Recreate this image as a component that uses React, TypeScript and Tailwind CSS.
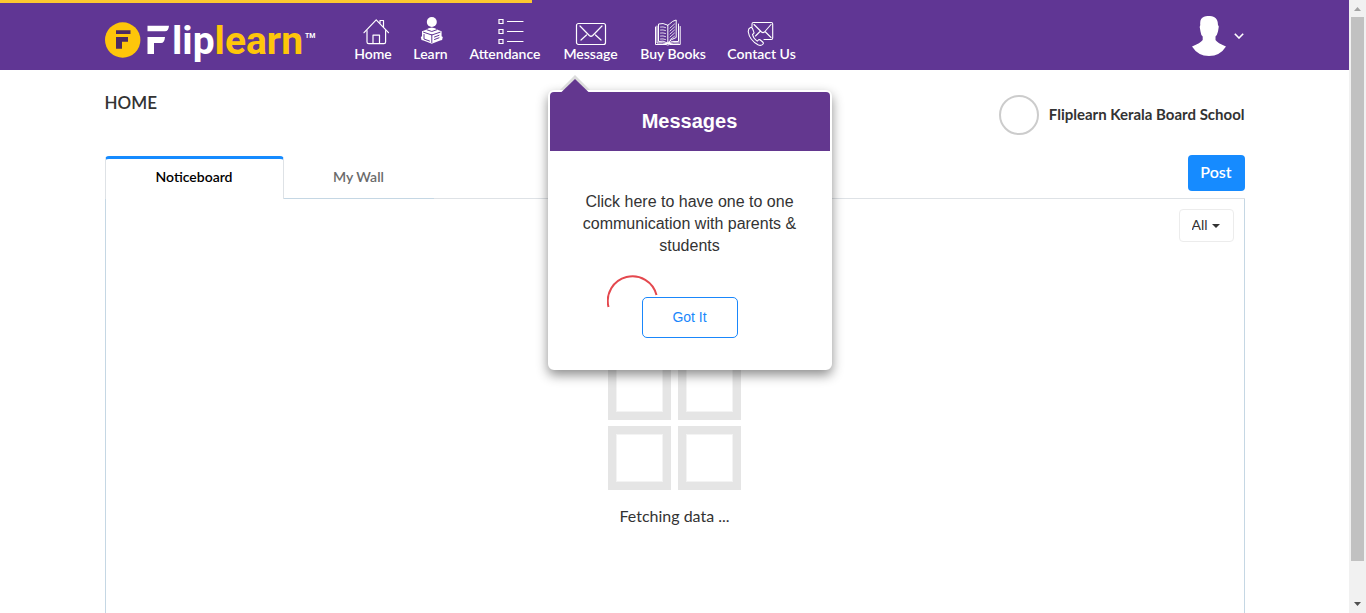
import type { ReactNode } from "react";

const iconProps = {
  width: 40,
  height: 30,
  viewBox: "0 0 40 30",
  fill: "none",
  stroke: "white",
  strokeWidth: 1.2,
  strokeLinecap: "round" as const,
  strokeLinejoin: "round" as const,
  "aria-hidden": true,
};

const HomeIcon = () => (
  <svg {...iconProps}>
    <path d="M11 16.7 23.2 3.8 35.5 16.7" />
    <path d="M14 14.5V26q0 1.7 1.7 1.7H31q1.6 0 1.6-1.7V14.5" />
    <path d="M20 27.5v-8.300h6.500v8.300M27 7V4.500h3.500V11" />
  </svg>
);

const LearnIcon = () => (
  <svg {...iconProps}>
    <circle cx="20.800" cy="6" r="5" fill="white" stroke="none" />
    <path
      d="M14.500 14q6.300-5 12.600 0l3.500 1.200v5l1.200.800-.700 3-2 .500-8.300 3.300-8.300-3.300-2-.500-.700-3 1.200-.800v-5z"
      fill="white"
      stroke="none"
    />
    <path
      d="M20.800 18.500v8M12.500 16.200l8.300 2.800 8.300-2.800M23.500 21l4.500-1.700M23.500 23.500l4.500-1.700M13 18.500v4.500l5.500 2M16 13.800l4.800 1.700 4.800-1.700"
      stroke="#603694"
      strokeWidth="1"
    />
  </svg>
);

const AttendanceIcon = () => (
  <svg {...iconProps} strokeLinejoin="miter">
    <path d="M14 3.500h4v4h-4zM14 13.500h4v4h-4zM14 23.500h4v4h-4z" />
    <path d="M22.500 5.500H38M22.500 15.500H38M22.500 25.500H38" />
  </svg>
);

const MessageIcon = () => (
  <svg {...iconProps}>
    <rect x="5.500" y="7.500" width="29" height="21" rx="2" />
    <path d="m9 10 9.300 9.500q1.700 1.500 3.400 0L31 10M10 24l5.500-5M30 24l-5.500-5" />
  </svg>
);

const BooksIcon = () => (
  <svg {...iconProps} strokeWidth="1">
    <path d="M14.500 9q-4.500-2.500-9-1v17.500q4.500-1.500 9 1.500z" />
    <path d="M14.500 9.500l2-1.500v0q3-3.300 6.700-4v17.500q-5 1.500-8.700 5.500" />
    <path d="M25.500 8v17.500q-6-1-10.700 1.500M4 10v17q6-.500 9 .500h4q3-1 8.500-.500" />
    <path d="M2.500 11v17.500H13q1.800 1 3.500 0h10.700V10.500" />
    <path
      d="M7.500 11q2.500-.500 5 .500M7.500 14q2.500-.500 5 .500M7.500 17q2.500-.500 5 .500M7.500 20q2.500-.500 5 .500M7.500 23q2.500-.500 5 .500M17 12l4.500-4M17 15l4.500-4M17 18l4.500-4M17 21l4.500-4M17 23.700l4.500-3.500"
      strokeWidth="0.800"
    />
  </svg>
);

const ContactIcon = () => (
  <svg {...iconProps} strokeWidth="1.1">
    <path d="M10 10.500V8q0-1.500 1.500-1.500h17.700q1.500 0 1.500 1.500v14q0 1.500-1.500 1.500H22" />
    <path d="m12 8.500 7.500 7.500q1.500 1.200 3 0L29 8.500M29 21.500l-5.500-5.500M13.500 20l4.500-4.500" />
    <path d="M8.500 11.500q-2.500 1-2.200 4.500Q7.500 24 16 28.800q3 1.500 5-.800.800-1-.300-2l-2.700-2.200q-1-.600-1.800.300l-1 1q-3.700-2.300-4.700-6.600l1-.900q.800-.700.300-1.700L10.400 12.300q-.700-1.200-1.900-.800z" />
  </svg>
);

const Popover = () => (
  <div
    role="dialog"
    aria-label="Messages"
    className="absolute -left-[15px] top-[74px] z-20 w-[284px] rounded-md border-2 border-white bg-white font-['Liberation_Sans',sans-serif] shadow-[0_5px_12px_rgba(0,0,0,0.45)]"
  >
    <svg className="absolute -top-[17px] left-2.5" width="30" height="17" viewBox="0 0 30 17" aria-hidden="true">
      <path d="M0 15 15 0l15 15z" fill="#dcdcdc" />
      <path d="M0 15h30v2H0z" fill="white" />
      <path d="M1.500 17 15 4l13.500 13z" fill="#63378f" />
    </svg>
    <h2 className="rounded-t bg-[#63378f] text-center text-xl font-bold leading-[59px] text-white">Messages</h2>
    <div className="flex flex-col items-center px-6 pb-[30px] pt-10">
      <p className="text-center text-base leading-[22px] text-[#333]">
        Click here to have one to one communication with parents &amp; students
      </p>
      <button
        type="button"
        className="mt-10 h-[41px] w-24 rounded-[5px] border border-[#1a87fb] bg-white pb-0.5 text-sm text-[#1a87fb]"
      >
        Got It
      </button>
    </div>
  </div>
);

type NavItem = { label: string; width: string; icon: ReactNode; popover?: boolean };

const navItems: NavItem[] = [
  { label: "Home", width: "w-[37px]", icon: <HomeIcon /> },
  { label: "Learn", width: "w-[34px]", icon: <LearnIcon /> },
  { label: "Attendance", width: "w-[71px]", icon: <AttendanceIcon /> },
  { label: "Message", width: "w-[56px]", icon: <MessageIcon />, popover: true },
  { label: "Buy Books", width: "w-[65px]", icon: <BooksIcon /> },
  { label: "Contact Us", width: "w-[68px]", icon: <ContactIcon /> },
];

const Logo = () => (
  <a href="#home" aria-label="Fliplearn" className="flex w-[250px] shrink-0 pt-3">
    <svg width="214" height="56" viewBox="0 -8 214 56" aria-hidden="true">
      <circle cx="17.700" cy="20" r="17.700" fill="#fec60a" />
      <path d="M11 10.300h14.500v3.700H11zM11 17h12v4.700h-6v7.100h-6z" fill="#4b2a63" />
      <path d="M42.500 5.700h21.500q-.500 5.500-4 5.500H42.500zM42.500 17h17.500q-.500 6-4 6h-7V34h-6.500z" fill="white" />
      <text x="67" y="34" fontSize="39" fontWeight="700" fontFamily="Roboto, sans-serif" fill="white">
        lip<tspan fill="#fec60a">learn</tspan>
      </text>
      <text x="200" y="18" fontSize="7" fontWeight="700" fontFamily="Roboto, sans-serif" fill="white">
        TM
      </text>
    </svg>
  </a>
);

const Header = () => (
  <header className="relative h-[70px] bg-[#603694]">
    <div className="absolute left-0 top-0 h-[3px] w-[39.4%] bg-[#fdc82f]" />
    <div className="mx-auto flex max-w-[1140px] items-start">
      <Logo />
      <nav className="pt-4">
        <ul className="flex gap-[22px]">
          {navItems.map((item) => (
            <li key={item.label} className={"relative " + item.width}>
              <a
                href="#nav"
                className="flex flex-col items-center whitespace-nowrap text-sm font-semibold leading-4 text-white"
              >
                <span className="flex w-full justify-center">
                  <span className="shrink-0">{item.icon}</span>
                </span>
                {item.label}
              </a>
              {item.popover && <Popover />}
            </li>
          ))}
        </ul>
      </nav>
      <button type="button" aria-label="Account" className="ml-auto mt-4 flex items-center gap-2 pr-px">
        <svg width="34" height="40" viewBox="0 0 34 40" fill="white" aria-hidden="true">
          <path d="M12 .800Q17-1 22 1q4 2 4 8l.800 1.500-.800 5q-1 4-2.500 5V24q2 3 10.500 6.500Q28 40 17 40T0 30.500Q8.500 27 10.700 24v-3.500Q9 19.500 8.500 15.500L7.700 11l.600-2Q7.500 2.500 12 .800z" />
        </svg>
        <svg
          width="10"
          height="6"
          viewBox="0 0 10 6"
          fill="none"
          stroke="white"
          strokeWidth="1.600"
          aria-hidden="true"
        >
          <path d="m.800.800 4.200 4.200L9.200.800" />
        </svg>
      </button>
    </div>
  </header>
);

const Placeholder = () => (
  <div className="h-16 w-[63px] border-8 border-[#e5e5e5]">
    <div className="h-full border border-[#f3f3f3]" />
  </div>
);

const Scrollbar = () => (
  <div className="flex w-[17px] shrink-0 flex-col items-center bg-[#f1f1f1]" aria-hidden="true">
    <svg width="17" height="17" viewBox="0 0 17 17">
      <path d="M5 11 8.500 7 12 11z" fill="#a3a3a3" />
    </svg>
    <div className="w-[13px] flex-1 bg-[#c1c1c1]" />
    <svg className="mt-[35px]" width="17" height="17" viewBox="0 0 17 17">
      <path d="M5 6 8.500 10 12 6z" fill="#505050" />
    </svg>
  </div>
);

export default function App() {
  return (
    <div className="flex min-h-screen bg-white font-[Lato,sans-serif] text-[#333]">
      <div className="relative flex min-w-0 flex-1 flex-col">
        <Header />
        <main className="mx-auto flex w-full max-w-[1140px] flex-1 flex-col">
          <div className="flex items-start justify-between pt-[25px]">
            <h1 className="text-[17px] font-semibold leading-4">HOME</h1>
            <div className="flex items-center gap-2.5">
              <span className="size-10 rounded-full border-2 border-[#ccc]" />
              <span className="pb-0.5 text-[15px] font-bold">Fliplearn Kerala Board School</span>
            </div>
          </div>
          <div className="mt-5 flex items-start">
            <div role="tablist" className="mt-px flex flex-1 text-sm font-semibold">
              <button
                type="button"
                role="tab"
                aria-selected="true"
                className="h-[43px] w-[179px] rounded-t border-x border-t-3 border-x-[#dee2e6] border-t-[#168bff] bg-white pb-1 text-black"
              >
                Noticeboard
              </button>
              <button
                type="button"
                role="tab"
                aria-selected="false"
                className="h-[43px] w-[150px] border-b border-[#c5d7e4] text-[#6b6b6b]"
              >
                My Wall
              </button>
              <span className="h-[43px] flex-1 border-b border-[#dee2e6]" />
            </div>
            <div className="flex h-11 items-start border-b border-[#dee2e6]">
              <button
                type="button"
                className="h-9 w-[57px] rounded bg-[#168bff] pb-0.5 text-base font-semibold text-white"
              >
                Post
              </button>
            </div>
          </div>
          <section className="flex flex-1 flex-col border-x border-[#c5d7e4] px-2.5 pt-2.5">
            <div className="relative self-end">
              <select
                aria-label="Filter notices"
                className="h-[33px] w-[55px] appearance-none rounded border border-[#ececec] bg-white pb-0.5 pl-3 text-sm text-[#333]"
              >
                <option>All</option>
              </select>
              <svg
                className="pointer-events-none absolute right-3.5 top-[15px]"
                width="8"
                height="5"
                viewBox="0 0 8 5"
                fill="#333"
                aria-hidden="true"
              >
                <path d="M0 0h8L4 4z" />
              </svg>
            </div>
            <div className="mt-[114px] flex flex-col items-center">
              <div className="grid grid-cols-2 gap-x-[7px] gap-y-1.5">
                <Placeholder />
                <Placeholder />
                <Placeholder />
                <Placeholder />
              </div>
              <p className="mt-3.5 text-base">Fetching data ...</p>
            </div>
          </section>
        </main>
        <svg
          className="absolute left-[45%] top-[275px] z-30"
          width="52"
          height="52"
          viewBox="0 0 52 52"
          fill="none"
          stroke="#e4484e"
          strokeWidth="2"
          role="img"
          aria-label="Loading"
        >
          <path d="M1.500 32A24.500 24.500 0 0 1 49.500 20" />
        </svg>
      </div>
      <Scrollbar />
    </div>
  );
}
